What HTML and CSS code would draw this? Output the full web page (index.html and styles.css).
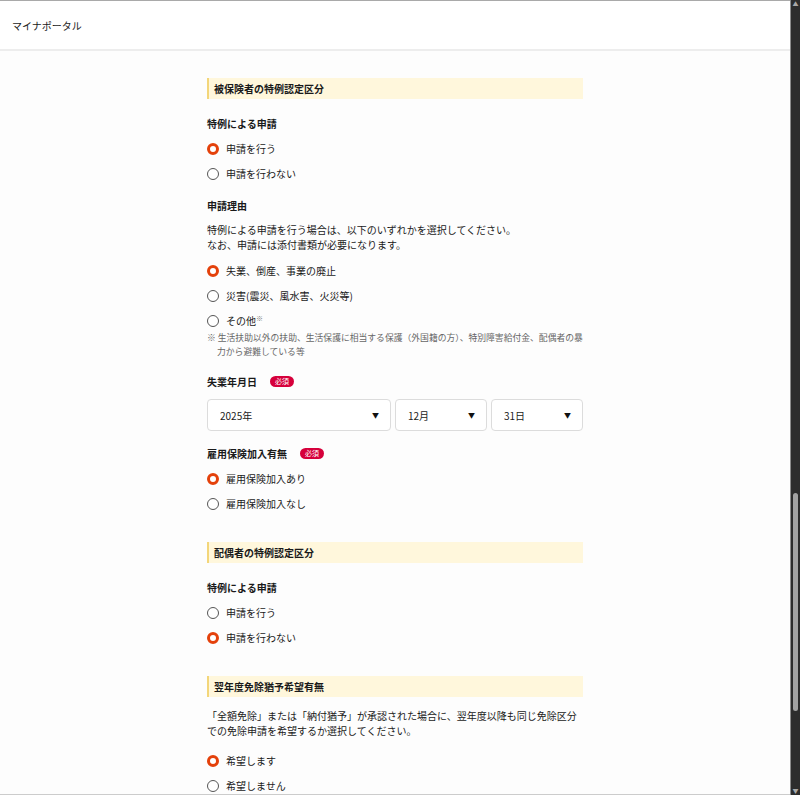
FILE: index.html
```html
<!DOCTYPE html>
<html lang="ja">
<head>
    <meta charset="UTF-8">
    <meta name="viewport" content="width=device-width, initial-scale=1.0">
    <title>マイナポータル</title>
    <link rel="stylesheet" href="styles.css">
</head>
<body>
<div class="frame">
    <div class="main">
        <header class="site-header">マイナポータル</header>

        <div class="content">
            <form class="form">
                <section class="section">
                    <h2 class="sec-title">被保険者の特例認定区分</h2>

                    <div class="field">
                        <div class="field-label">特例による申請</div>
                        <div class="radio-list">
                            <label class="radio"><input type="radio" name="r1" checked>申請を行う</label>
                            <label class="radio"><input type="radio" name="r1">申請を行わない</label>
                        </div>
                    </div>

                    <div class="field">
                        <div class="field-label">申請理由</div>
                        <p class="desc">特例による申請を行う場合は、以下のいずれかを選択してください。<br>なお、申請には添付書類が必要になります。</p>
                        <div class="radio-list">
                            <label class="radio"><input type="radio" name="r2" checked>失業、倒産、事業の廃止</label>
                            <label class="radio"><input type="radio" name="r2">災害(震災、風水害、火災等)</label>
                            <label class="radio"><input type="radio" name="r2">その他<span class="mark">※</span></label>
                        </div>
                        <p class="note">※ 生活扶助以外の扶助、生活保護に相当する保護（外国籍の方）、特別障害給付金、配偶者の暴力から避難している等</p>
                    </div>

                    <div class="field">
                        <div class="field-label">失業年月日 <span class="badge">必須</span></div>
                        <div class="date-row">
                            <div class="select"><select><option>2025年</option></select></div>
                            <div class="select"><select><option>12月</option></select></div>
                            <div class="select"><select><option>31日</option></select></div>
                        </div>
                    </div>

                    <div class="field">
                        <div class="field-label">雇用保険加入有無 <span class="badge">必須</span></div>
                        <div class="radio-list">
                            <label class="radio"><input type="radio" name="r3" checked>雇用保険加入あり</label>
                            <label class="radio"><input type="radio" name="r3">雇用保険加入なし</label>
                        </div>
                    </div>
                </section>

                <section class="section">
                    <h2 class="sec-title">配偶者の特例認定区分</h2>
                    <div class="field">
                        <div class="field-label">特例による申請</div>
                        <div class="radio-list">
                            <label class="radio"><input type="radio" name="r4">申請を行う</label>
                            <label class="radio"><input type="radio" name="r4" checked>申請を行わない</label>
                        </div>
                    </div>
                </section>

                <section class="section">
                    <h2 class="sec-title">翌年度免除猶予希望有無</h2>
                    <p class="desc lead">「全額免除」または「納付猶予」が承認された場合に、翌年度以降も同じ免除区分での免除申請を希望するか選択してください。</p>
                    <div class="radio-list spaced">
                        <label class="radio"><input type="radio" name="r5" checked>希望します</label>
                        <label class="radio"><input type="radio" name="r5">希望しません</label>
                    </div>
                </section>
            </form>
        </div>
    </div>

    <div class="scrollbar">
        <span class="sb-arrow">&#9650;</span>
        <span class="sb-thumb"></span>
        <span class="sb-arrow down">&#9660;</span>
    </div>
</div>
</body>
</html>
```

FILE: styles.css
```css
* {
    box-sizing: border-box;
}
html, body {
    margin: 0;
    padding: 0;
    overflow: hidden;
}
body {
    font-family: "Noto Sans CJK JP", "Noto Sans", sans-serif;
    color: #1a1a1a;
    background: #fff;
}
.frame {
    display: flex;
    height: 795px;
}
.main {
    flex: 1;
    display: flex;
    flex-direction: column;
    border-top: 1px solid #a9a9a9;
    border-bottom: 1px solid #cccccc;
    overflow: hidden;
    min-width: 0;
}
.site-header {
    height: 50px;
    flex-shrink: 0;
    display: flex;
    align-items: center;
    padding-left: 12px;
    font-size: 10px;
    background: #fff;
    border-bottom: 2px solid #ededed;
}
.content {
    flex: 1;
    overflow: hidden;
    background: #fdfdfd;
}
.form {
    width: 376px;
    margin: 0 auto;
    padding-top: 27px;
}
.section + .section {
    margin-top: 26px;
}
.sec-title {
    margin: 0;
    height: 21px;
    line-height: 21px;
    padding-left: 5px;
    font-size: 10px;
    font-weight: 700;
    background: #fff7dc;
    border-left: 2px solid #f3d67a;
}
.field {
    margin-top: 12px;
}
.sec-title + .field {
    margin-top: 17px;
}
.field-label {
    display: flex;
    align-items: center;
    gap: 13px;
    font-size: 10px;
    font-weight: 700;
    line-height: 15px;
}
.badge {
    display: inline-block;
    height: 11px;
    line-height: 11px;
    padding: 0 5px;
    border-radius: 6px;
    background: #d6003b;
    color: #fff;
    font-size: 7px;
    font-weight: 400;
}
.desc {
    margin: 9px 0 0;
    font-size: 10px;
    line-height: 15px;
}
.desc.lead {
    margin-top: 11px;
}
.radio-list {
    margin-top: 5px;
}
.desc + .radio-list {
    margin-top: 6px;
}
.radio-list.spaced {
    margin-top: 10px;
}
.radio {
    display: flex;
    align-items: center;
    height: 25px;
    font-size: 10px;
    cursor: pointer;
}
.radio input {
    appearance: none;
    -webkit-appearance: none;
    width: 12px;
    height: 12px;
    margin: 0 7px 0 0;
    border: 1.5px solid #555;
    border-radius: 50%;
    background: #fff;
}
.radio input:checked {
    border: 3.5px solid #e4410b;
}
.mark {
    font-size: 7px;
    color: #777;
    align-self: flex-start;
    margin-top: 5px;
}
.note {
    margin: -2px 0 0;
    padding: 0 0 3px 10px;
    text-indent: -10px;
    font-size: 8.8px;
    line-height: 14px;
    color: #666;
}
.date-row {
    display: grid;
    grid-template-columns: 2fr 1fr 1fr;
    gap: 4px;
    margin-top: 10px;
    padding-bottom: 3px;
}
.select {
    position: relative;
}
.select select {
    appearance: none;
    -webkit-appearance: none;
    width: 100%;
    height: 32px;
    padding: 0 12px;
    border: 1px solid #dcdcdc;
    border-radius: 4px;
    background: #fff;
    font-family: inherit;
    font-size: 10px;
    color: #1a1a1a;
}
.select::after {
    content: "\25BC";
    position: absolute;
    right: 12px;
    top: 50%;
    transform: translateY(-50%);
    font-size: 7px;
    color: #111;
    pointer-events: none;
}
.scrollbar {
    width: 10px;
    flex-shrink: 0;
    display: flex;
    flex-direction: column;
    align-items: center;
    background: #2d2d2d;
    border-left: 1px solid #8c8c8c;
}
.sb-arrow {
    font-size: 6px;
    line-height: 8px;
    color: #a8a8a8;
}
.sb-thumb {
    width: 5px;
    height: 218px;
    margin-top: 485px;
    border-radius: 3px;
    background: #a3a3a3;
}
.sb-arrow.down {
    margin-top: auto;
}
```
